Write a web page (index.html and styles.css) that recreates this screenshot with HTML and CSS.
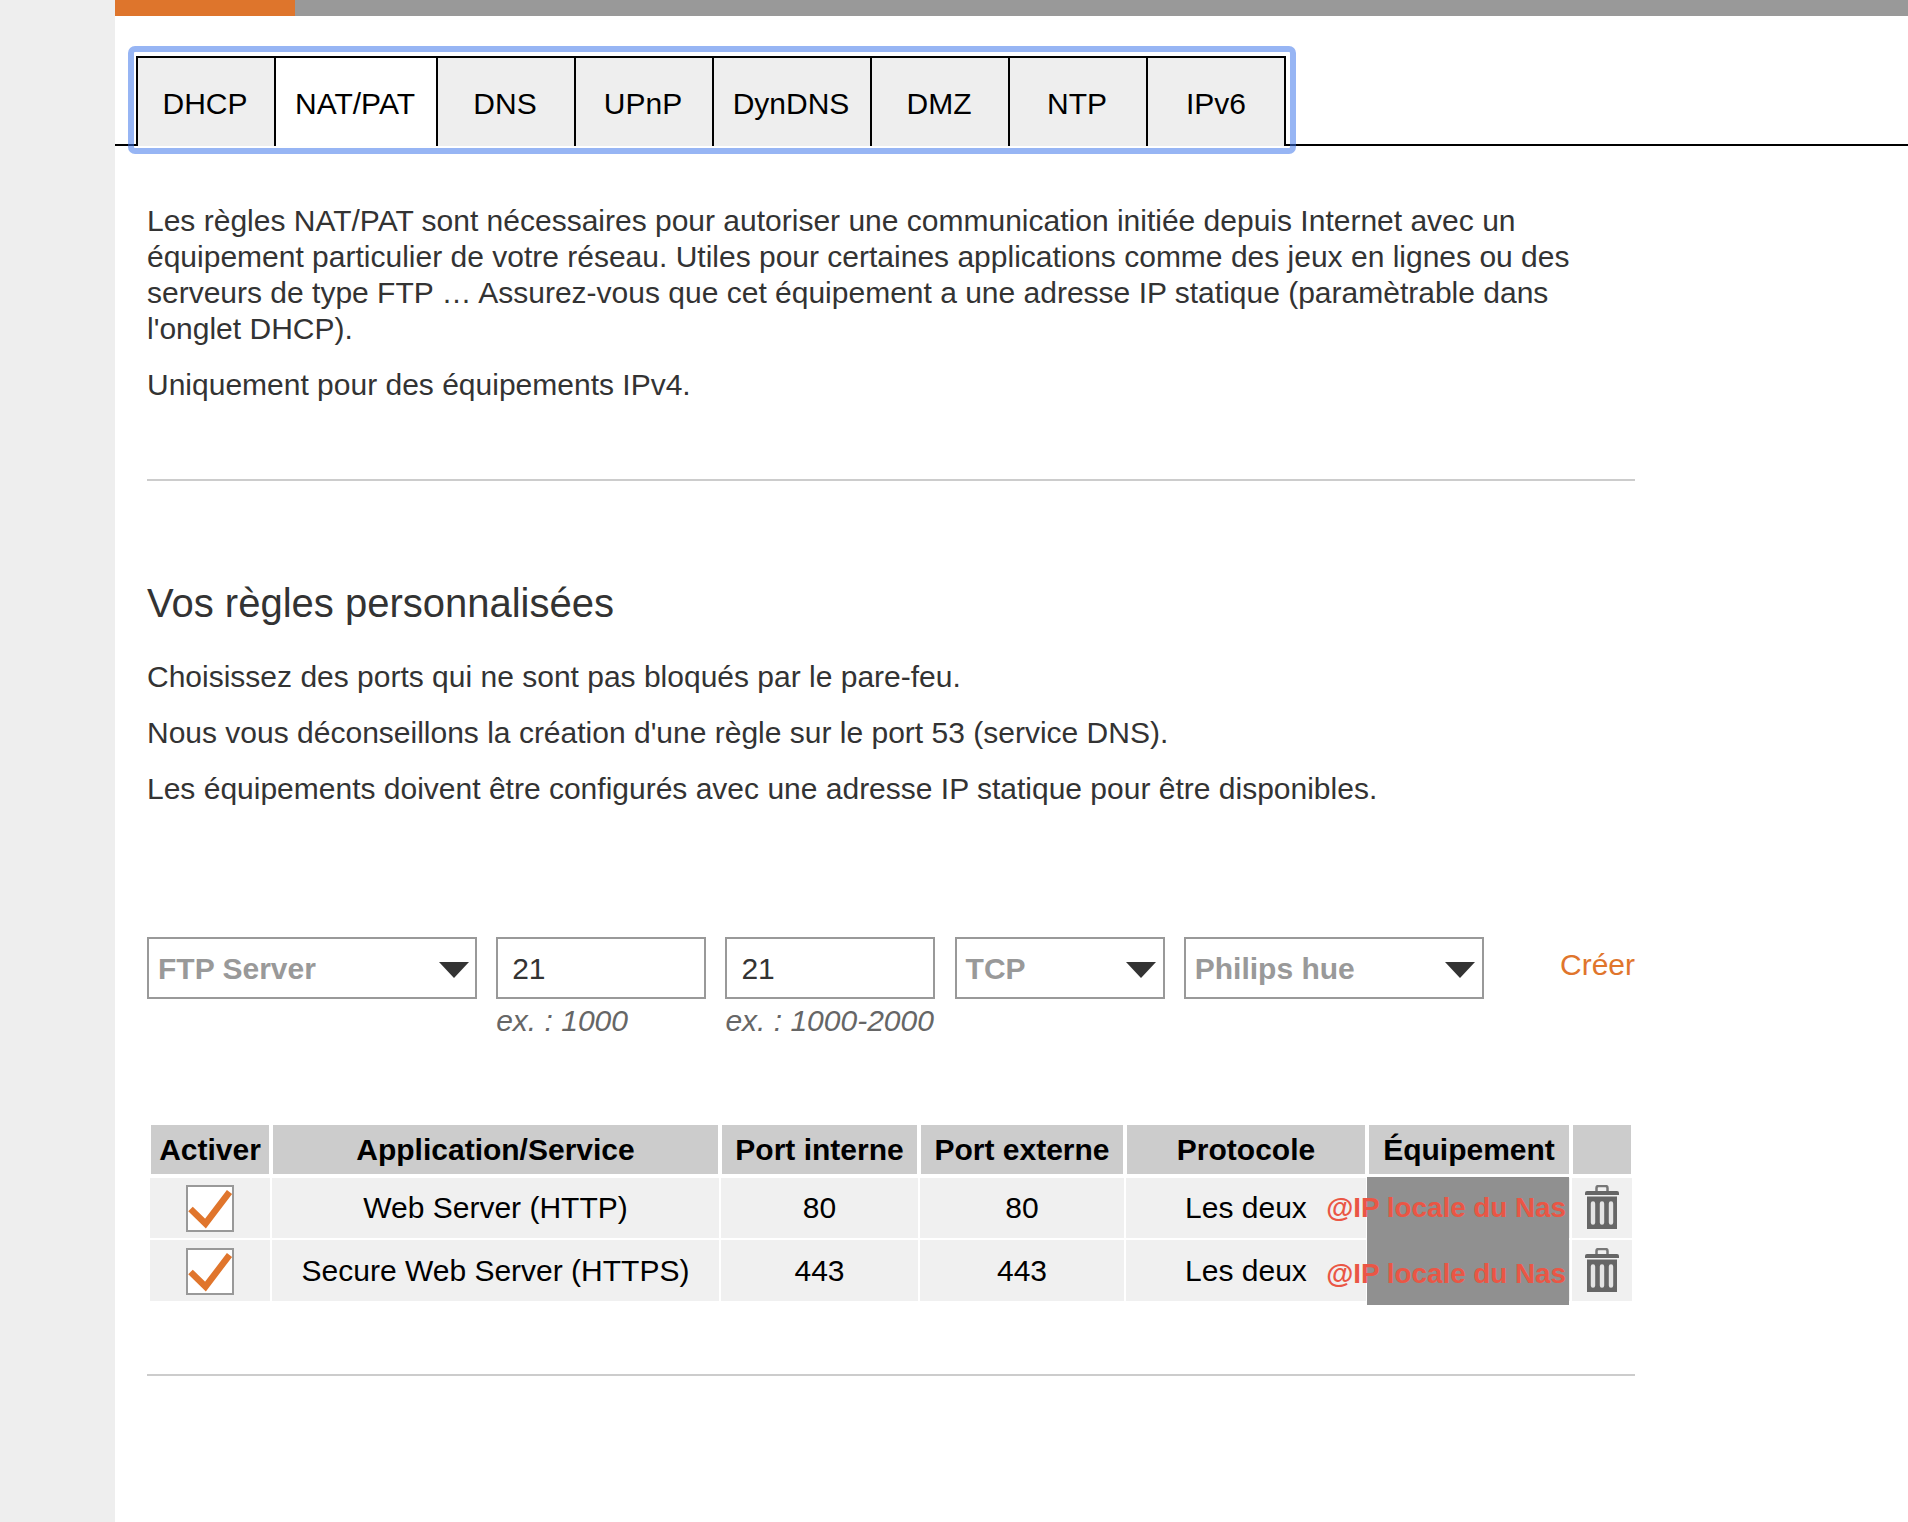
FILE: index.html
```html
<!DOCTYPE html>
<html lang="fr">
<head>
    <meta charset="UTF-8">
    <meta name="viewport" content="width=device-width, initial-scale=1.0">
    <title>NAT/PAT</title>
    <link rel="stylesheet" href="styles.css">
</head>
<body>
    <div class="page">
        <div class="top-bar"><div class="top-bar-active"></div></div>

        <nav class="tab-bar">
            <ul class="tabs">
                <li class="tab">DHCP</li>
                <li class="tab tab-wide active">NAT/PAT</li>
                <li class="tab">DNS</li>
                <li class="tab">UPnP</li>
                <li class="tab tab-medium">DynDNS</li>
                <li class="tab">DMZ</li>
                <li class="tab">NTP</li>
                <li class="tab tab-last">IPv6</li>
            </ul>
        </nav>

        <main class="content">
            <section class="intro">
                <p>Les règles NAT/PAT sont nécessaires pour autoriser une communication initiée depuis Internet avec un<br>
                équipement particulier de votre réseau. Utiles pour certaines applications comme des jeux en lignes ou des<br>
                serveurs de type FTP … Assurez-vous que cet équipement a une adresse IP statique (paramètrable dans<br>
                l'onglet DHCP).</p>
                <p>Uniquement pour des équipements IPv4.</p>
            </section>

            <section class="rules">
                <h2>Vos règles personnalisées</h2>
                <p>Choisissez des ports qui ne sont pas bloqués par le pare-feu.</p>
                <p>Nous vous déconseillons la création d'une règle sur le port 53 (service DNS).</p>
                <p>Les équipements doivent être configurés avec une adresse IP statique pour être disponibles.</p>

                <div class="rule-form">
                    <div class="select select-service">FTP Server
                        <svg class="arrow" width="30" height="16" viewBox="0 0 30 16"><path d="M0 0h30L15 16z" fill="#333"/></svg>
                    </div>
                    <div class="field">
                        <input type="text" class="port" value="21">
                        <span class="hint">ex. : 1000</span>
                    </div>
                    <div class="field">
                        <input type="text" class="port" value="21">
                        <span class="hint">ex. : 1000-2000</span>
                    </div>
                    <div class="select select-protocol">TCP
                        <svg class="arrow" width="30" height="16" viewBox="0 0 30 16"><path d="M0 0h30L15 16z" fill="#333"/></svg>
                    </div>
                    <div class="select select-device">Philips hue
                        <svg class="arrow" width="30" height="16" viewBox="0 0 30 16"><path d="M0 0h30L15 16z" fill="#333"/></svg>
                    </div>
                    <a class="create">Créer</a>
                </div>

                <div class="table-wrap">
                    <table class="rule-table">
                        <colgroup>
                            <col class="col-active"><col class="col-service"><col class="col-internal"><col class="col-external"><col class="col-protocol"><col class="col-device"><col class="col-delete">
                        </colgroup>
                        <tr>
                            <th>Activer</th>
                            <th>Application/Service</th>
                            <th>Port interne</th>
                            <th>Port externe</th>
                            <th>Protocole</th>
                            <th>Équipement</th>
                            <th></th>
                        </tr>
                        <tr class="rule">
                            <td><svg class="check" width="48" height="47" viewBox="0 0 48 47"><path d="M1 1h46v45H1z" fill="#fff" stroke="#999" stroke-width="2"/><path d="M4.500 24l15 14.500L43.500 7" fill="none" stroke="#e0752c" stroke-width="6.5"/></svg></td>
                            <td>Web Server (HTTP)</td>
                            <td>80</td>
                            <td>80</td>
                            <td>Les deux</td>
                            <td></td>
                            <td><svg class="trash" width="34" height="46" viewBox="0 0 34 46"><path d="M11.500 6V3q0-2 2-2h7q2 0 2 2v3" fill="none" stroke="#777" stroke-width="2.5"/><path d="M0 10V8q0-2 2-2h30q2 0 2 2v2z" fill="#666"/><path d="M2 11.500h30V44H2z" fill="#666"/><path d="M8 18.500v19M17 18.500v19M26 18.500v19" stroke="#e4e4e4" stroke-width="4.4" stroke-linecap="round"/></svg></td>
                        </tr>
                        <tr class="rule rule-last">
                            <td><svg class="check" width="48" height="47" viewBox="0 0 48 47"><path d="M1 1h46v45H1z" fill="#fff" stroke="#999" stroke-width="2"/><path d="M4.500 24l15 14.500L43.500 7" fill="none" stroke="#e0752c" stroke-width="6.5"/></svg></td>
                            <td>Secure Web Server (HTTPS)</td>
                            <td>443</td>
                            <td>443</td>
                            <td>Les deux</td>
                            <td></td>
                            <td><svg class="trash" width="34" height="46" viewBox="0 0 34 46"><path d="M11.500 6V3q0-2 2-2h7q2 0 2 2v3" fill="none" stroke="#777" stroke-width="2.5"/><path d="M0 10V8q0-2 2-2h30q2 0 2 2v2z" fill="#666"/><path d="M2 11.500h30V44H2z" fill="#666"/><path d="M8 18.500v19M17 18.500v19M26 18.500v19" stroke="#e4e4e4" stroke-width="4.4" stroke-linecap="round"/></svg></td>
                        </tr>
                    </table>

                    <!-- mask over the device names -->
                    <div class="mask">
                        <span class="mask-label">@IP locale du Nas</span>
                        <span class="mask-label">@IP locale du Nas</span>
                    </div>
                </div>
            </section>
        </main>
    </div>
</body>
</html>
```

FILE: styles.css
```css
* {
    box-sizing: border-box;
}

body {
    margin: 0;
    padding-left: 115px;
    background: #eee;
    color: #333;
    font-family: "Liberation Sans", Arial, Helvetica, sans-serif;
    font-size: 30px;
    line-height: 36px;
}

.page {
    height: 1522px;
    overflow: hidden;
    background: #fff;
}

.top-bar {
    height: 16px;
    background: #999;
}

.top-bar-active {
    width: 180px;
    height: 16px;
    background: #de752c;
}

/* Tabs */
.tab-bar {
    display: flex;
    height: 130px;
    padding: 36px 0 0 19px;
    border-bottom: 2px solid #000;
}

.tabs {
    display: flex;
    height: 96px;
    margin: 0;
    padding: 4px 4px 2px 2px;
    list-style: none;
    color: #000;
    outline: 6px solid rgba(59, 115, 235, 0.53);
    border-radius: 1px;
}

.tab {
    width: 138px;
    height: 90px;
    padding: 28px 2px 0 0;
    border-top: 2px solid #000;
    border-left: 2px solid #000;
    background: #eee;
    text-align: center;
}

.tab-wide {
    width: 162px;
}

.tab-medium {
    width: 158px;
}

.tab-last {
    width: 140px;
    padding-right: 0;
    border-right: 2px solid #000;
}

.tab.active {
    background: #fff;
}

/* Content */
.content {
    width: 1520px;
    padding: 57px 0 0 32px;
}

p {
    margin: 0 0 20px;
    white-space: nowrap;
}

.intro {
    height: 278px;
    border-bottom: 2px solid #ccc;
}

.rules {
    height: 895px;
    padding-top: 98px;
    border-bottom: 2px solid #ccc;
}

h2 {
    margin: 0 0 32px;
    font-size: 40px;
    font-weight: normal;
    line-height: 48px;
}

/* New rule form */
.rule-form {
    display: flex;
    gap: 19.2px;
    height: 185px;
    margin-top: 130px;
}

.select {
    display: flex;
    justify-content: space-between;
    align-items: center;
    height: 62px;
    padding: 2px 7px 0 9px;
    border: 2px solid #999;
    color: #999;
    font-weight: bold;
}

.arrow {
    margin-top: 1px;
}

.select-service {
    width: 330px;
    padding-right: 6px;
}

.select-protocol {
    width: 210px;
}

.select-device {
    width: 300px;
}

.field {
    width: 210px;
}

.port {
    display: block;
    width: 210px;
    height: 62px;
    padding: 2px 14px 0;
    border: 2px solid #999;
    border-radius: 0;
    background: #fff;
    color: #333;
    font: inherit;
}

.hint {
    display: block;
    margin-top: 4px;
    color: #666;
    font-style: italic;
    white-space: nowrap;
}

.create {
    margin: 10px 0 0 auto;
    color: #e0752c;
}

/* Rule table */
.table-wrap {
    position: relative;
}

.rule-table {
    width: 1486px;
    margin-left: 1px;
    table-layout: fixed;
    border-spacing: 2px;
    color: #000;
    text-align: center;
}

.col-active { width: 120px; }
.col-service { width: 447px; }
.col-internal { width: 197px; }
.col-external { width: 204px; }
.col-protocol { width: 240px; }
.col-device { width: 202px; }
.col-delete { width: 60px; }

th {
    height: 52px;
    padding: 0;
    border: 1px solid #fff;
    border-bottom-width: 2px;
    background: #ccc;
    background-clip: padding-box;
    white-space: nowrap;
}

td {
    height: 60px;
    padding: 0;
    background: #f0f0f0;
    white-space: nowrap;
}

.rule-last td {
    height: 61px;
    padding-top: 1px;
}

.check,
.trash {
    display: block;
    margin: 0 auto;
}

.mask {
    position: absolute;
    top: 55px;
    left: 1220px;
    display: flex;
    flex-direction: column;
    align-items: flex-end;
    gap: 30px;
    width: 202px;
    height: 128px;
    padding: 13px 3px 0 0;
    background: #909090;
}

.mask-label {
    color: #ea5645;
    font-size: 27.8px;
    font-weight: bold;
    white-space: nowrap;
}
```
